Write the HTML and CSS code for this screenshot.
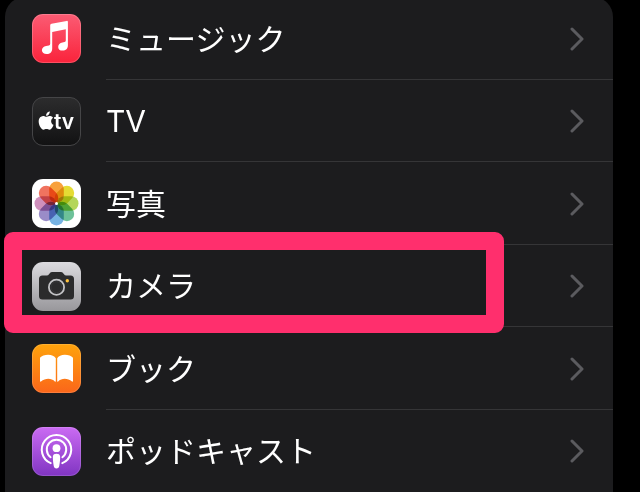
FILE: index.html
```
<!DOCTYPE html>
<html lang="ja">
<head>
    <meta charset="UTF-8">
    <meta name="viewport" content="width=device-width, initial-scale=1.0">
    <title>設定</title>
    <link rel="stylesheet" href="styles.css">
</head>
<body>
    <ul class="settings">
        <li class="row">
            <a class="link" href="#music">
                <svg class="icon" viewBox="0 0 49 49" aria-hidden="true">
                    <defs>
                        <linearGradient id="music-bg" x1="0" y1="0" x2="0" y2="1">
                            <stop offset="0" stop-color="#fb5c74"/>
                            <stop offset="1" stop-color="#fa233b"/>
                        </linearGradient>
                    </defs>
                    <rect width="49" height="49" rx="11" fill="url(#music-bg)"/>
                    <rect x=".5" y=".5" width="48" height="48" rx="10.5" fill="none" stroke="#fff" stroke-opacity=".2"/>
                    <path fill="#fff" d="M18.200 11.300q0-1.300 1.300-1.600l15.100-2.800q1.300-.2 1.300 1v23.300c0 3.500-2.100 5.300-5.200 5.400-2.800.1-4.500-1.400-4.500-3.700 0-2.500 1.700-3.900 4.200-4.400l2.100-.4q1.300-.3 1.300-1.500V15.200L20.200 17.900v16.500c0 3.600-2.200 5.600-5.400 5.700-2.700.1-4.900-1.500-4.900-3.800 0-2.400 1.700-3.800 4.200-4.300l2.700-.5q1.400-.3 1.400-1.700z"/>
                </svg>
                <span class="name">ミュージック</span>
                <svg class="chevron" viewBox="0 0 14 24" aria-hidden="true"><path d="M2 2l10 10L2 22"/></svg>
            </a>
        </li>
        <li class="row">
            <a class="link" href="#tv">
                <svg class="icon" viewBox="0 0 49 49" aria-hidden="true">
                    <defs>
                        <linearGradient id="tv-bg" x1="0" y1="0" x2="0" y2="1">
                            <stop offset="0" stop-color="#2c2c2d"/>
                            <stop offset="1" stop-color="#121213"/>
                        </linearGradient>
                    </defs>
                    <rect x=".5" y=".5" width="48" height="48" rx="10.5" fill="url(#tv-bg)" stroke="#454547"/>
                    <path fill="#fff" transform="translate(5 14.500) scale(.76)" d="M12.152 6.896c-.948 0-2.415-1.078-3.960-1.040-2.040.027-3.910 1.183-4.961 3.014-2.117 3.675-.546 9.103 1.519 12.090 1.013 1.454 2.208 3.090 3.792 3.039 1.520-.065 2.090-.987 3.935-.987 1.831 0 2.350.987 3.960.948 1.637-.026 2.676-1.480 3.676-2.948 1.156-1.688 1.636-3.325 1.662-3.415-.039-.013-3.182-1.221-3.220-4.857-.026-3.040 2.480-4.494 2.597-4.559-1.429-2.090-3.623-2.324-4.390-2.376-2-.156-3.675 1.090-4.610 1.090zM15.530 3.830c.843-1.012 1.400-2.427 1.245-3.830-1.207.052-2.662.805-3.532 1.818-.780.896-1.454 2.338-1.273 3.714 1.338.104 2.715-.688 3.559-1.701"/>
                    <text class="tv-mark" x="22" y="32">tv</text>
                </svg>
                <span class="name name-latin">TV</span>
                <svg class="chevron" viewBox="0 0 14 24" aria-hidden="true"><path d="M2 2l10 10L2 22"/></svg>
            </a>
        </li>
        <li class="row">
            <a class="link" href="#photos">
                <svg class="icon" viewBox="0 0 49 49" aria-hidden="true">
                    <rect width="49" height="49" rx="11" fill="#fff"/>
                    <g class="petals" transform="translate(24.500 24.500)">
                        <rect x="-7.300" y="-22" width="14.600" height="21.500" rx="7.300" fill="#f8a13c"/>
                        <rect x="-7.300" y="-22" width="14.600" height="21.500" rx="7.300" fill="#e5dc34" transform="rotate(45)"/>
                        <rect x="-7.300" y="-22" width="14.600" height="21.500" rx="7.300" fill="#b4d65a" transform="rotate(90)"/>
                        <rect x="-7.300" y="-22" width="14.600" height="21.500" rx="7.300" fill="#6dc199" transform="rotate(135)"/>
                        <rect x="-7.300" y="-22" width="14.600" height="21.500" rx="7.300" fill="#77b3e3" transform="rotate(180)"/>
                        <rect x="-7.300" y="-22" width="14.600" height="21.500" rx="7.300" fill="#9a8cc8" transform="rotate(225)"/>
                        <rect x="-7.300" y="-22" width="14.600" height="21.500" rx="7.300" fill="#cf8fbc" transform="rotate(270)"/>
                        <rect x="-7.300" y="-22" width="14.600" height="21.500" rx="7.300" fill="#f0735f" transform="rotate(315)"/>
                    </g>
                    <circle cx="24.500" cy="24.500" r="1.500" fill="#fff"/>
                </svg>
                <span class="name">写真</span>
                <svg class="chevron" viewBox="0 0 14 24" aria-hidden="true"><path d="M2 2l10 10L2 22"/></svg>
            </a>
        </li>
        <li class="row row-marked">
            <a class="link" href="#camera">
                <svg class="icon" viewBox="0 0 49 49" aria-hidden="true">
                    <defs>
                        <linearGradient id="camera-bg" x1="0" y1="0" x2="0" y2="1">
                            <stop offset="0" stop-color="#dcdbdf"/>
                            <stop offset="1" stop-color="#98979b"/>
                        </linearGradient>
                    </defs>
                    <rect width="49" height="49" rx="11" fill="url(#camera-bg)"/>
                    <path fill="#2b2b2c" d="M7 17q0-3.500 3.500-3.500h4.300q1.400 0 2.200-1.200l.6-.9q1-1.400 2.700-1.400h8.400q1.700 0 2.700 1.400l.6.9q.8 1.200 2.200 1.200h4.300q3.500 0 3.500 3.500v17q0 3.500-3.500 3.500H10.500Q7 37.500 7 34z"/>
                    <circle cx="24.500" cy="25.200" r="7.600" fill="#2b2b2c" stroke="#c2c2c5" stroke-width="1.800"/>
                    <circle cx="24.500" cy="25.200" r="5.500" fill="none" stroke="#3b3b3d" stroke-width=".7"/>
                    <circle cx="35.300" cy="18.700" r="1.700" fill="#ffc23d"/>
                </svg>
                <span class="name">カメラ</span>
                <svg class="chevron" viewBox="0 0 14 24" aria-hidden="true"><path d="M2 2l10 10L2 22"/></svg>
            </a>
        </li>
        <li class="row">
            <a class="link" href="#books">
                <svg class="icon" viewBox="0 0 49 49" aria-hidden="true">
                    <defs>
                        <linearGradient id="books-bg" x1="0" y1="0" x2="0" y2="1">
                            <stop offset="0" stop-color="#fea30c"/>
                            <stop offset="1" stop-color="#fb661a"/>
                        </linearGradient>
                    </defs>
                    <rect width="49" height="49" rx="11" fill="url(#books-bg)"/>
                    <rect x=".5" y=".5" width="48" height="48" rx="10.500" fill="none" stroke="#fff" stroke-opacity=".15"/>
                    <path fill="#fff" d="M23.800 37V14.300c-1.200-2.300-4.200-3.500-7.600-3.500-3.500 0-6.500 1-8.200 3V37q0 1 1 .6c4.500-3.700 10.300-3.600 14.100.1q.7.300.7-.7zM25.200 37V14.300c1.200-2.300 4.200-3.500 7.600-3.500 3.500 0 6.500 1 8.200 3V37q0 1-1 .6c-4.500-3.700-10.300-3.600-14.100.1q-.7.300-.7-.7z"/>
                </svg>
                <span class="name">ブック</span>
                <svg class="chevron" viewBox="0 0 14 24" aria-hidden="true"><path d="M2 2l10 10L2 22"/></svg>
            </a>
        </li>
        <li class="row">
            <a class="link" href="#podcasts">
                <svg class="icon" viewBox="0 0 49 49" aria-hidden="true">
                    <defs>
                        <linearGradient id="podcasts-bg" x1="0" y1="0" x2="0" y2="1">
                            <stop offset="0" stop-color="#cb6bf3"/>
                            <stop offset="1" stop-color="#8035c2"/>
                        </linearGradient>
                    </defs>
                    <rect width="49" height="49" rx="11" fill="url(#podcasts-bg)"/>
                    <rect x=".5" y=".5" width="48" height="48" rx="10.500" fill="none" stroke="#fff" stroke-opacity=".15"/>
                    <g fill="none" stroke="#fff" stroke-width="2" stroke-linecap="round">
                        <path d="M18.700 36.200a14.700 14.700 0 1 1 11.600 0"/>
                        <path d="M18.600 30.200a9.700 9.700 0 1 1 11.800 0"/>
                    </g>
                    <circle cx="24.500" cy="21.200" r="3.900" fill="#fff"/>
                    <path fill="#fff" d="M20.900 29.300c.2-1.700 1.500-2.500 3.600-2.500s3.400.8 3.600 2.500c.2 2.700-.3 6.600-.8 9.500-.3 1.800-1.200 2.600-2.800 2.600s-2.500-.8-2.800-2.600c-.5-2.900-1-6.800-.8-9.500z"/>
                </svg>
                <span class="name">ポッドキャスト</span>
                <svg class="chevron" viewBox="0 0 14 24" aria-hidden="true"><path d="M2 2l10 10L2 22"/></svg>
            </a>
        </li>
    </ul>
</body>
</html>
```
FILE: styles.css
```
body {
    margin: 0;
    background-color: #000;
    color: #fff;
    font-family: "Noto Sans CJK JP", sans-serif;
    overflow: hidden;
}
.settings {
    display: grid;
    grid-template-rows: repeat(3, 83px 82px);
    list-style: none;
    margin: -3px 27px 0 5px;
    padding: 0;
    border-radius: 20px 20px 0 0;
    background-color: #1c1c1e;
}
.row {
    position: relative;
    display: grid;
}
/* separator starts at the text, not under the icon */
.row:not(:last-child)::after {
    content: "";
    position: absolute;
    left: 101px;
    right: 0;
    bottom: 0;
    height: 1px;
    background-color: #353537;
}
.link {
    display: flex;
    align-items: center;
    padding: 0 29px 0 27px;
    color: inherit;
    text-decoration: none;
}
.icon {
    flex: none;
    width: 49px;
    height: 49px;
    margin-right: 25px;
}
.name {
    flex: 1;
    padding-bottom: 4px;
    font-size: 30px;
    font-weight: 400;
    line-height: 40px;
}
.name-latin {
    padding-bottom: 0;
    font-family: Inter, sans-serif;
}
.tv-mark {
    fill: #fff;
    font-family: Inter, sans-serif;
    font-size: 21px;
    font-weight: 600;
}
.petals rect {
    mix-blend-mode: multiply;
}
.chevron {
    flex: none;
    width: 14px;
    height: 24px;
    fill: none;
    stroke: #5b5b5f;
    stroke-width: 3;
    stroke-linecap: round;
    stroke-linejoin: round;
}
/* pink frame round the camera row */
.row-marked::before {
    content: "";
    position: absolute;
    z-index: 1;
    top: -13px;
    bottom: -6px;
    left: -1px;
    right: 109px;
    border: 18px solid #ff2f6d;
    border-radius: 9px;
    pointer-events: none;
}
```
